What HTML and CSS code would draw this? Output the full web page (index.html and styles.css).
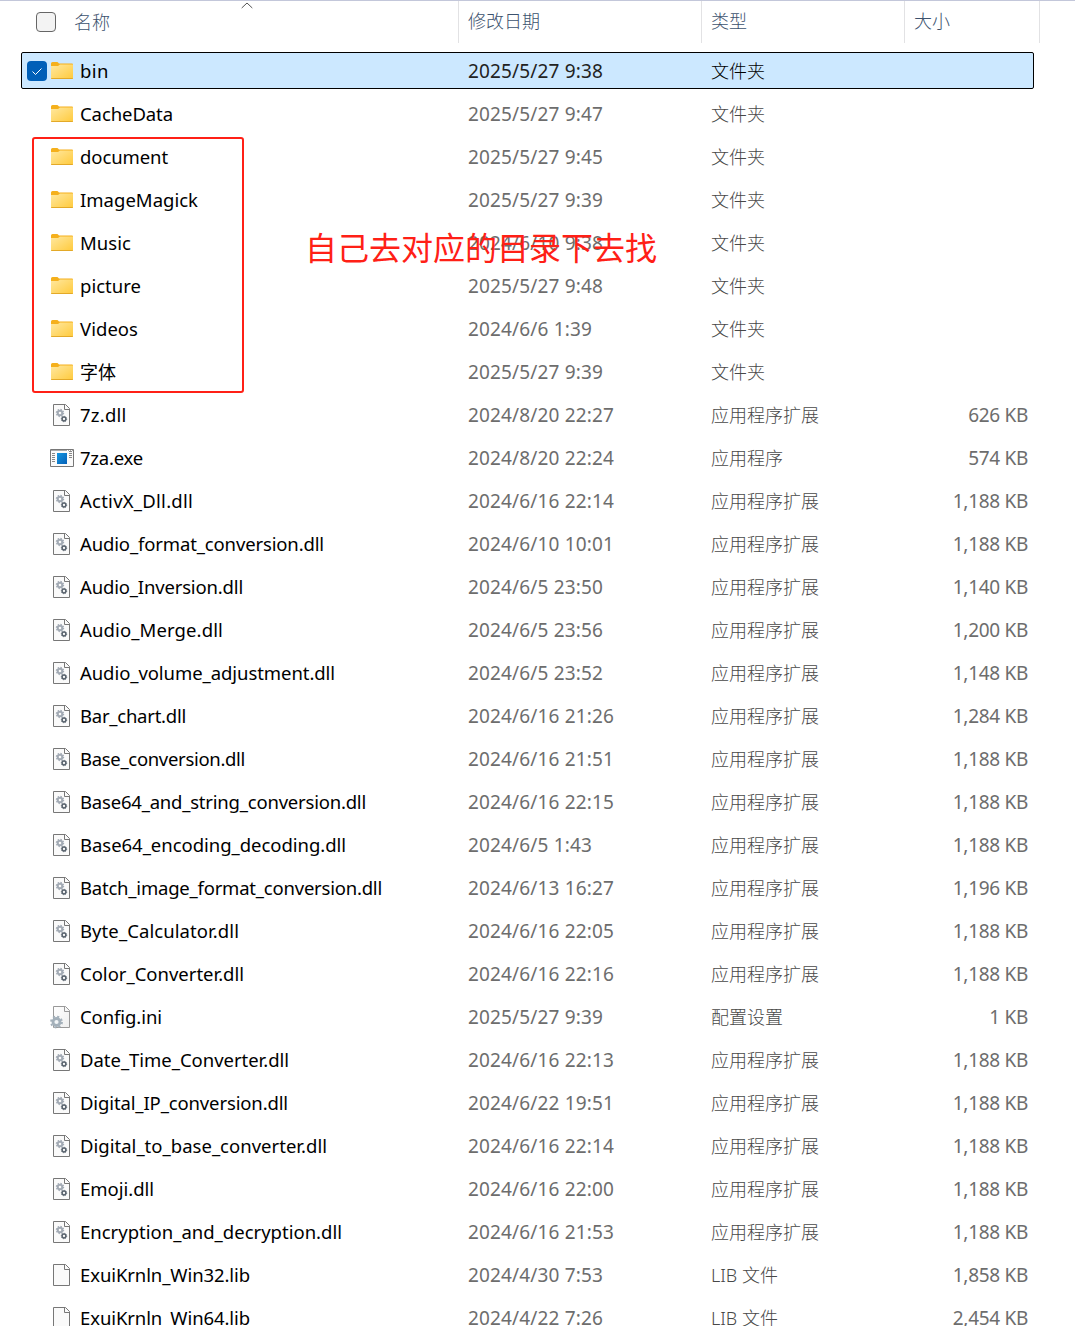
FILE: index.html
```html
<!DOCTYPE html>
<html lang="zh-CN">
<head>
<meta charset="utf-8">
<title>文件列表</title>
<link rel="stylesheet" href="styles.css">
</head>
<body>
<svg class="defs" width="0" height="0" aria-hidden="true">
  <defs>
    <linearGradient id="folderFill" x1="0" y1="0" x2="1" y2="1">
      <stop offset="0" stop-color="#ffe8a0"/><stop offset="1" stop-color="#ffca3c"/>
    </linearGradient>
    <linearGradient id="appFill" x1="0" y1="0" x2="1" y2="1">
      <stop offset="0" stop-color="#1597e0"/><stop offset="1" stop-color="#0560b8"/>
    </linearGradient>
    <linearGradient id="iniFill" x1="0" y1="0" x2="1" y2="1">
      <stop offset="0" stop-color="#fff"/><stop offset="1" stop-color="#eeeeee"/>
    </linearGradient>
    <symbol id="folder" viewBox="0 0 24 24">
      <path d="M1 4.500q0-1.500 1.500-1.500H7q1 0 1.500 1L9 4.500h13q1 0 1 1v3H1z" fill="#f5b01c"/>
      <path d="M1 7h7L10 5.500h13V19q0 1-1 1H2q-1 0-1-1z" fill="url(#folderFill)"/>
      <path d="M1.200 19.500h21.600" stroke="#e3a928"/>
    </symbol>
    <symbol id="page" viewBox="0 0 24 24">
      <path d="M3.500 1.500h12l4 4v17h-16z" fill="#fafafa" stroke="#777"/>
      <path d="M14.500 1.500v5h5" fill="none" stroke="#777"/>
    </symbol>
    <symbol id="dll" viewBox="0 0 24 24">
      <use href="#page"/>
      <circle cx="10" cy="10" r="2.300" fill="none" stroke="#a2aab4" stroke-width="2"/>
      <circle cx="10" cy="10" r="3.500" fill="none" stroke="#a2aab4" stroke-width="1.400" stroke-dasharray="1.370 1.379"/>
      <circle cx="14" cy="16" r="1.900" fill="none" stroke="#59636e" stroke-width="1.500"/>
      <circle cx="14" cy="16" r="2.700" fill="none" stroke="#59636e" stroke-width=".900" stroke-dasharray="1.060 1.060"/>
    </symbol>
    <symbol id="exe" viewBox="0 0 24 24">
      <path d="M.500 3.500h23v17H.500z" fill="#fafafa" stroke="#777"/>
      <path d="M1 4.500h22" stroke="#aaa"/>
      <path d="M17 4.500h1m1 0h1m1 0h1" stroke="#fff"/>
      <path d="M2 7.500h3M2 9.500h3M2 11.500h3M2 13.500h3M2 15.500h3M19 5.500h3M19 7.500h3M19 9.500h3M19 11.500h3" stroke="#888"/>
      <path d="M7 7h10v11H7z" fill="url(#appFill)"/>
    </symbol>
    <symbol id="ini" viewBox="0 0 24 24">
      <path d="M3.500 1.500h12l4 4v17h-16z" fill="url(#iniFill)" stroke="#999"/>
      <path d="M14.500 1.500v5h5" fill="none" stroke="#999"/>
      <circle cx="6.500" cy="17" r="3.500" fill="#f2f5f7" stroke="#a3b0ba" stroke-width="2.800"/>
      <circle cx="6.500" cy="17" r="5.500" fill="none" stroke="#a3b0ba" stroke-width="1.800" stroke-dasharray="2.160 2.160"/>
    </symbol>
  </defs>
</svg>
<main class="explorer">
  <header class="head">
    <div class="cell name"><span class="check"></span>名称
      <svg class="sort" viewBox="0 0 12 7"><path d="M.700 6L6 1l5.300 5" fill="none" stroke="#555"/></svg>
    </div>
    <div class="cell">修改日期</div>
    <div class="cell">类型</div>
    <div class="cell">大小</div>
  </header>
  <div class="list" id="list"></div>
  <div class="frame"></div>
  <div class="note">自己去对应的目录下去找</div>
</main>
<script src="list.js"></script>
</body>
</html>
```

FILE: styles.css
```css
body {
  margin: 0;
  background: #fff;
  font-family: "Noto Sans", "Noto Sans CJK SC", sans-serif;
  font-size: 18px;
}
.defs { display: block; }
.explorer {
  position: relative;
  box-sizing: border-box;
  width: 1075px;
  height: 1326px;
  overflow: hidden;
  border-top: 1px solid #c3c7da;
}
.head {
  display: grid;
  grid-template-columns: 459px 243px 203px 135px;
  height: 42px;
  margin-bottom: 9px;
  color: #3c526e;
  font-family: "Noto Sans CJK SC", sans-serif;
  font-weight: 300;
  line-height: 39px;
}
.head .cell {
  box-sizing: border-box;
  padding-left: 9px;
  border-right: 1px solid #e2e2e4;
}
.head .name {
  position: relative;
  display: flex;
  align-items: center;
  gap: 18px;
  height: 42px;
  padding-bottom: 2px;
  padding-left: 36px;
}
.check {
  box-sizing: border-box;
  width: 20px;
  height: 20px;
  margin-top: 2px;
  border: 1px solid #666;
  border-radius: 4px;
  background: #f3f3f3;
}
.sort {
  position: absolute;
  left: 241px;
  top: 1px;
  width: 12px;
  height: 7px;
}
.row {
  box-sizing: border-box;
  display: grid;
  grid-template-columns: 438px 243px 203px 122px;
  align-items: center;
  width: 1013px;
  height: 37px;
  margin: 0 0 6px 21px;
  border: 1px solid transparent;
  border-radius: 2px;
  color: #6d6d6d;
  white-space: nowrap;
  line-height: 33px;
}
.row.selected {
  border-color: #000;
  background: #cce8ff;
  color: #222;
}
.title {
  display: flex;
  align-items: center;
  padding-left: 5px;
  color: #000;
}
.tick {
  width: 20px;
  height: 20px;
  margin: 1px 3px 0 0;
}
.icon {
  width: 24px;
  height: 24px;
  margin: 1px 6px 0 0;
}
.latin { font-size: 18.500px; }
.cjk { padding-top: 2px; }
.date, .size { padding-top: 1px; font-size: 19px; }
.date { letter-spacing: .15px; }
.size { letter-spacing: -.3px; }
.date, .kind { padding-left: 8px; }
.kind { padding-top: 2px; color: #484848; font-weight: 300; }
.selected .kind { color: #000; }
.size { text-align: right; }
.frame {
  position: absolute;
  left: 32px;
  top: 136px;
  box-sizing: border-box;
  width: 212px;
  height: 256px;
  border: 2px solid #ff2016;
  border-radius: 3px;
}
.note {
  position: absolute;
  left: 305px;
  top: 221px;
  color: #ff2016;
  font-family: "Noto Sans CJK SC", sans-serif;
  font-size: 32px;
  line-height: 48px;
  white-space: nowrap;
}
```

FILE: list.js
```js
const DLL = '应用程序扩展';
const DIR = '文件夹';
// name, modified, kind, size, icon, name width
const files = [
  ['bin', '2025/5/27 9:38', DIR, '', 'folder', 29],
  ['CacheData', '2025/5/27 9:47', DIR, '', 'folder', 93],
  ['document', '2025/5/27 9:45', DIR, '', 'folder', 88],
  ['ImageMagick', '2025/5/27 9:39', DIR, '', 'folder', 118],
  ['Music', '2024/6/10 9:38', DIR, '', 'folder', 51],
  ['picture', '2025/5/27 9:48', DIR, '', 'folder', 61],
  ['Videos', '2024/6/6 1:39', DIR, '', 'folder', 58],
  ['字体', '2025/5/27 9:39', DIR, '', 'folder', 36],
  ['7z.dll', '2024/8/20 22:27', DLL, '626 KB', 'dll', 46.5],
  ['7za.exe', '2024/8/20 22:24', '应用程序', '574 KB', 'exe', 63],
  ['ActivX_Dll.dll', '2024/6/16 22:14', DLL, '1,188 KB', 'dll', 113],
  ['Audio_format_conversion.dll', '2024/6/10 10:01', DLL, '1,188 KB', 'dll', 244],
  ['Audio_Inversion.dll', '2024/6/5 23:50', DLL, '1,140 KB', 'dll', 163],
  ['Audio_Merge.dll', '2024/6/5 23:56', DLL, '1,200 KB', 'dll', 143],
  ['Audio_volume_adjustment.dll', '2024/6/5 23:52', DLL, '1,148 KB', 'dll', 255],
  ['Bar_chart.dll', '2024/6/16 21:26', DLL, '1,284 KB', 'dll', 106],
  ['Base_conversion.dll', '2024/6/16 21:51', DLL, '1,188 KB', 'dll', 165],
  ['Base64_and_string_conversion.dll', '2024/6/16 22:15', DLL, '1,188 KB', 'dll', 286],
  ['Base64_encoding_decoding.dll', '2024/6/5 1:43', DLL, '1,188 KB', 'dll', 266],
  ['Batch_image_format_conversion.dll', '2024/6/13 16:27', DLL, '1,196 KB', 'dll', 302],
  ['Byte_Calculator.dll', '2024/6/16 22:05', DLL, '1,188 KB', 'dll', 159],
  ['Color_Converter.dll', '2024/6/16 22:16', DLL, '1,188 KB', 'dll', 164],
  ['Config.ini', '2025/5/27 9:39', '配置设置', '1 KB', 'ini', 82],
  ['Date_Time_Converter.dll', '2024/6/16 22:13', DLL, '1,188 KB', 'dll', 209],
  ['Digital_IP_conversion.dll', '2024/6/22 19:51', DLL, '1,188 KB', 'dll', 208],
  ['Digital_to_base_converter.dll', '2024/6/16 22:14', DLL, '1,188 KB', 'dll', 247],
  ['Emoji.dll', '2024/6/16 22:00', DLL, '1,188 KB', 'dll', 74],
  ['Encryption_and_decryption.dll', '2024/6/16 21:53', DLL, '1,188 KB', 'dll', 262],
  ['ExuiKrnln_Win32.lib', '2024/4/30 7:53', 'LIB 文件', '1,858 KB', 'page', 170],
  ['ExuiKrnln_Win64.lib', '2024/4/22 7:26', 'LIB 文件', '2,454 KB', 'page', 170],
];
const tick = '<svg class="tick" viewBox="0 0 20 20"><rect width="20" height="20" rx="4" fill="#005fb8"/><path d="M5.500 10.500l3 3 6-6" fill="none" stroke="#fff"/></svg>';
const list = document.getElementById('list');
list.innerHTML = files.map(([name, date, kind, size, icon], i) => `
  <div class="row${i === 0 ? ' selected' : ''}">
    <div class="title">${i === 0 ? tick : '<span class="tick"></span>'}<svg class="icon"><use href="#${icon}"/></svg><span class="label ${/^[\x00-\x7f]+$/.test(name) ? 'latin' : 'cjk'}">${name}</span></div>
    <div class="date">${date}</div>
    <div class="kind">${kind}</div>
    <div class="size">${size}</div>
  </div>`).join('');
// Track each label so that it fills its width
list.querySelectorAll('.label').forEach((label, i) => {
  const spare = files[i][5] - label.getBoundingClientRect().width;
  label.style.letterSpacing = (spare / files[i][0].length).toFixed(3) + 'px';
});
```
